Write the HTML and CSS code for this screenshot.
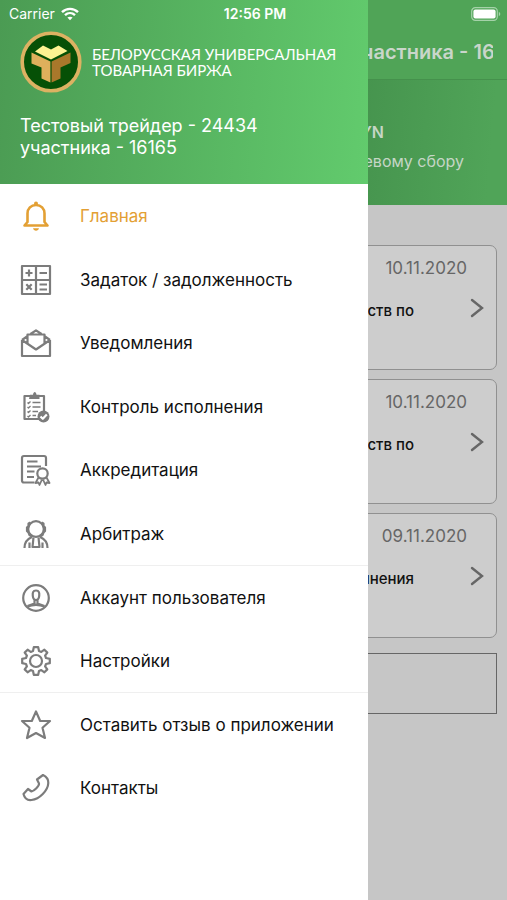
FILE: index.html
```html
<!DOCTYPE html>
<html lang="ru">
  <head>
    <meta charset="UTF-8" />
    <meta name="viewport" content="width=device-width, initial-scale=1.0" />
    <title>Белорусская универсальная товарная биржа</title>
    <link rel="stylesheet" href="styles.css">
  </head>
  <body>
    <!-- Status bar -->
    <div class="status-bar">
      <div class="status-left">
        <span>Carrier</span>
        <svg class="wifi" viewBox="0 0 18 14" fill="none" stroke="#fff" stroke-width="2.4">
          <path d="M1 5.2C5.6 0.7 12.4 0.7 17 5.2" />
          <path d="M4 8.2C6.9 5.4 11.1 5.4 14 8.2" />
          <path d="M6.4 10.6C7.9 9.3 10.1 9.3 11.6 10.6L9 13.3Z" fill="#fff" stroke="none" />
        </svg>
      </div>
      <span class="status-time">12:56 PM</span>
      <div class="status-right">
        <svg class="battery" viewBox="0 0 30 14">
          <rect x="0.7" y="0.7" width="25.6" height="12.6" rx="3.6" fill="none" stroke="#a5d2a9" stroke-width="1.2" />
          <rect x="2.4" y="2.4" width="22.2" height="9.2" rx="2" fill="#fff" />
          <path d="M27.8 4.8C29.8 5.6 29.8 8.4 27.8 9.2Z" fill="#a5d2a9" />
        </svg>
      </div>
    </div>

    <!-- Main screen -->
    <main class="screen">
      <header class="nav-bar">
        <h1 class="nav-title">участника - 16165</h1>
      </header>
      <section class="balance">
        <p class="balance-sum">BYN</p>
        <p class="balance-note">по биржевому сбору</p>
      </section>
      <div class="cards">
        <a class="card" href="#">
          <span class="card-date">10.11.2020</span>
          <span class="card-text">средств по</span>
          <svg class="chevron" viewBox="0 0 14 20"><path d="M2 2L12 10L2 18" /></svg>
        </a>
        <a class="card" href="#">
          <span class="card-date">10.11.2020</span>
          <span class="card-text">средств по</span>
          <svg class="chevron" viewBox="0 0 14 20"><path d="M2 2L12 10L2 18" /></svg>
        </a>
        <a class="card" href="#">
          <span class="card-date">09.11.2020</span>
          <span class="card-text">исполнения</span>
          <svg class="chevron" viewBox="0 0 14 20"><path d="M2 2L12 10L2 18" /></svg>
        </a>
      </div>
      <div class="box"></div>
    </main>

    <!-- Side menu -->
    <aside class="drawer">
      <div class="drawer-header">
        <div class="brand">
          <svg class="logo" viewBox="0 0 62 62">
            <circle cx="31" cy="31" r="28.800" fill="#065006" stroke="#dcb262" stroke-width="3.600" />
            <path d="M15 20.500L23 14.500L31 18.500L38.500 14.500L47.500 20L31 28.500Z" fill="#fdf392" />
            <path d="M11.500 21.500L30.400 30.500V51.500L21.500 47.500V36.500L11.500 32.500Z" fill="#dfb05c" />
            <path d="M50.500 21.500L31.600 30.500V51.500L40.500 47.500V36.500L50.500 32Z" fill="#a9782b" />
          </svg>
          <p class="brand-name">БЕЛОРУССКАЯ УНИВЕРСАЛЬНАЯ<br />ТОВАРНАЯ БИРЖА</p>
        </div>
        <p class="user">Тестовый трейдер - 24434<br />участника - 16165</p>
      </div>

      <nav class="menu">
        <a class="menu-item active" href="#">
          <svg class="icon" viewBox="0 0 32 32">
            <path d="M7.500 22V13.500C7.500 8.500 11 5 16 5S24.500 8.500 24.500 13.500V22L27.500 25.500H4.500Z" stroke-width="2.600" />
            <circle cx="16" cy="3.500" r="2" class="fill" />
            <path d="M13 28.300H19C18.500 31.500 13.500 31.500 13 28.300Z" class="fill" />
          </svg>
          <span>Главная</span>
        </a>
        <a class="menu-item" href="#">
          <svg class="icon" viewBox="0 0 32 32">
            <path d="M2 2H30V30H2ZM16 2V30M2 16H30" />
            <path d="M5.500 9H12.500M9 5.500V12.500M19.500 9H27M6.300 20.300L11.700 25.700M11.700 20.300L6.300 25.700M19.500 20.500H27M19.500 25.500H27" />
          </svg>
          <span>Задаток / задолженность</span>
        </a>
        <a class="menu-item" href="#">
          <svg class="icon" viewBox="0 0 32 32">
            <path d="M2 13V29H30V13M2 13L16 22.500L30 13M2 13L7 9.500M30 13L25 9.500M7.500 16V7.500H24.500V16M10.500 7L16 3.300L21.500 7" />
          </svg>
          <span>Уведомления</span>
        </a>
        <a class="menu-item" href="#">
          <svg class="icon" viewBox="0 0 32 32">
            <path d="M22 28H4.500V5H24V20" />
            <path d="M10 3.800H13C13.500 0 16 0 16.500 3.800H19.500V8H9Z" class="fill" />
            <path d="M7.500 11.500L8.500 12.500L10.500 10.500M7.500 16L8.500 17L10.500 15M7.500 20.500L8.500 21.500L10.500 19.500M7.500 25L8.500 26L10.500 24M12.500 11.500H20.500M12.500 16H20.500M12.500 20.500H18M12.500 24.500H16" stroke-width="1.300" />
            <circle cx="23.500" cy="25.500" r="6" class="fill" />
            <path d="M20.500 25.500L22.800 27.800L26.800 23.500" class="tick" />
          </svg>
          <span>Контроль исполнения</span>
        </a>
        <a class="menu-item" href="#">
          <svg class="icon" viewBox="0 0 32 32">
            <path d="M14.500 28.500H4C2.500 28.500 2 28 2 26.500V4C2 2.500 2.500 2 4 2H24C25.500 2 26 2.500 26 4V12" />
            <path d="M7 7.500H17.500M7 12.500H21M7 17.500H14.500M7 23H14" />
            <circle cx="22.500" cy="19.500" r="5.200" />
            <path d="M18.500 23.500L15.500 29L18.500 28.500L19.500 31L22 25.500M26.500 23.500L29.500 29L26.500 28.500L25.500 31L23 25.500" stroke-width="1.800" />
          </svg>
          <span>Аккредитация</span>
        </a>
        <a class="menu-item" href="#">
          <svg class="icon" viewBox="0 0 32 32">
            <circle cx="16" cy="11" r="7.800" />
            <path d="M10.500 4.500L8.500 5.500V8L7 9.500V13L8.500 14.500L9.500 17L12 18.500M21.500 4.500L23.500 5.500V8L25 9.500V13L23.500 14.500L22.500 17L20 18.500" />
            <path d="M4.500 30C4.500 24.500 7 21 12 19M27.500 30C27.500 24.500 25 21 20 19M9.500 24.500V30M22.500 24.500V30M13.500 19.500L12.500 29H19.500L18.500 19.500" />
          </svg>
          <span>Арбитраж</span>
        </a>
        <a class="menu-item divided" href="#">
          <svg class="icon" viewBox="0 0 32 32">
            <circle cx="16" cy="16" r="12.800" />
            <path d="M16 8.500C12.800 8.500 12.500 11 12.800 14C13 16 14 18 16 18S19 16 19.200 14C19.500 11 19.200 8.500 16 8.500ZM14.500 18V21.500L7.500 24M17.500 18V21.500L24.500 24M7.500 24.500C12.500 22.500 19.500 22.500 24.500 24.500" />
          </svg>
          <span>Аккаунт пользователя</span>
        </a>
        <a class="menu-item" href="#">
          <svg class="icon" viewBox="0 0 32 32">
            <circle cx="16" cy="16" r="6" />
            <path d="M13 6L13.800 2.200H18.200L19 6L21.300 6.900L24.400 4.700L27.300 7.600L25.100 10.700L26 13L29.800 13.800V18.200L26 19L25.100 21.300L27.300 24.400L24.400 27.300L21.300 25.100L19 26L18.200 29.800H13.800L13 26L10.700 25.100L7.600 27.300L4.700 24.400L6.900 21.300L6 19L2.200 18.200V13.800L6 13L6.900 10.700L4.700 7.600L7.600 4.700L10.700 6.900Z" />
          </svg>
          <span>Настройки</span>
        </a>
        <a class="menu-item divided" href="#">
          <svg class="icon" viewBox="0 0 32 32">
            <path d="M16 2.500L20.200 12H30L22.500 18.800L25 29L16 24L7 29L9.500 18.800L2 12H11.800Z" />
          </svg>
          <span>Оставить отзыв о приложении</span>
        </a>
        <a class="menu-item" href="#">
          <svg class="icon" viewBox="0 0 32 32">
            <path d="M23 3L17 7.500L19 11.500C19.500 14 14 19 11.500 19.500L8 17L3.500 22C4.500 26 7.500 28.500 11.500 28C19.500 27 28 18.500 28.300 11C28.500 7.500 26 4.500 23 3Z" />
          </svg>
          <span>Контакты</span>
        </a>
      </nav>
    </aside>
  </body>
</html>
```

FILE: styles.css
```css
* {
  box-sizing: border-box;
}

body {
  margin: 0;
  min-height: 100vh;
  position: relative;
  overflow-x: hidden;
  background-color: #c6c6c6;
  font-family: Inter, "Liberation Sans", sans-serif;
  color: #111;
}

h1,
p {
  margin: 0;
}

a {
  color: inherit;
  text-decoration: none;
}

/* status bar lies over both the screen and the menu */
.status-bar {
  position: absolute;
  top: 0;
  left: 0;
  right: 0;
  z-index: 3;
  height: 28px;
  padding: 0 6px 0 9px;
  display: grid;
  grid-template-columns: 1fr auto 1fr;
  align-items: center;
  color: #fff;
  font-size: 14px;
  line-height: 16px;
}

.status-left {
  display: flex;
  align-items: center;
  gap: 6px;
}

.status-time {
  font-weight: 600;
}

.status-right {
  display: flex;
  justify-content: flex-end;
}

.wifi {
  width: 18px;
  height: 14px;
}

.battery {
  width: 30px;
  height: 14px;
}

/* main screen, dimmed */
.nav-bar {
  height: 80px;
  padding: 40px 14px 0 350px;
  background-color: #50a457;
  border-bottom: 1px solid #45914c;
}

.nav-title {
  overflow: hidden;
  white-space: nowrap;
  font-size: 20px;
  line-height: 25px;
  font-weight: 600;
  color: #c9d6ca;
}

.balance {
  height: 125px;
  padding: 42px 43px 0 0;
  background: linear-gradient(95deg, #46944e 70%, #50a458 96%);
  color: #c5d6c6;
  text-align: right;
}

.balance-sum {
  padding-right: 80px;
  font-size: 16px;
  line-height: 20px;
  font-weight: 600;
}

.balance-note {
  padding-top: 8px;
  font-size: 16px;
  line-height: 22px;
}

.cards {
  display: grid;
  gap: 9px;
  padding: 40px 10px 0;
}

.card {
  height: 125px;
  padding: 11px 12px 0 14px;
  display: grid;
  grid-template-columns: 1fr auto;
  grid-template-rows: 22px 58px;
  align-items: center;
  background-color: #cdcdcd;
  border: 1px solid #909090;
  border-radius: 7px;
  text-align: right;
}

.card-date {
  grid-column: 1 / 3;
  padding-right: 17px;
  font-size: 17px;
  color: #666;
}

.card-text {
  padding: 4px 56px 0 0;
  font-size: 15px;
  font-weight: 500;
}

.chevron {
  width: 14px;
  height: 20px;
  fill: none;
  stroke: #666;
  stroke-width: 2.4;
  stroke-linecap: round;
}

.box {
  height: 61px;
  margin: 15px 10px 0;
  border: 1px solid #666;
}

/* side menu */
.drawer {
  position: absolute;
  top: 0;
  left: 0;
  bottom: 0;
  z-index: 2;
  width: 368px;
  background-color: #fff;
}

.drawer-header {
  height: 184px;
  padding: 31px 20px 0;
  background: linear-gradient(95deg, #4b9b53, #62cb6d);
  color: #fff;
}

.brand {
  display: flex;
  align-items: center;
  gap: 10px;
}

.logo {
  flex: none;
  width: 62px;
  height: 62px;
}

.brand-name {
  white-space: nowrap;
  font-family: Lato, "Open Sans", sans-serif;
  font-size: 15px;
  line-height: 16px;
}

.user {
  padding-top: 22px;
  font-size: 18px;
  line-height: 22px;
}

.menu {
  display: grid;
  grid-auto-rows: 64px 63px;
}

.menu-item {
  display: flex;
  align-items: center;
  gap: 28px;
  padding: 0 20px;
  font-size: 17px;
  white-space: nowrap;
}

.menu-item.active {
  color: #e3a034;
}

.divided {
  border-top: 1px solid #efefef;
}

.icon {
  flex: none;
  width: 32px;
  height: 32px;
  fill: none;
  stroke: #7c7c7c;
  stroke-width: 2.2;
  stroke-linejoin: round;
}

.icon .fill {
  fill: #7c7c7c;
  stroke: none;
}

.icon .tick {
  stroke: #fff;
}

.active .icon {
  stroke: #e3a034;
}

.active .icon .fill {
  fill: #e3a034;
}
```
